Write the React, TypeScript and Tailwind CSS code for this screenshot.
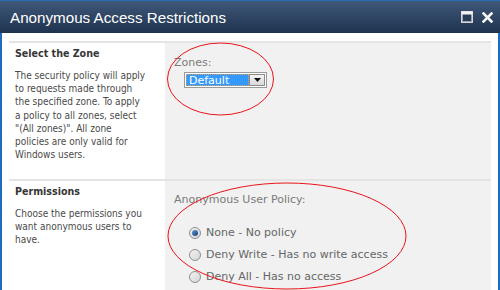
import React from "react";

const cond = { fontFamily: '"DejaVu Sans Condensed", "Liberation Sans", sans-serif', fontStretch: "condensed" as const };

function Radio({ checked }: { checked?: boolean }) {
  return (
    <div className="relative w-[12px] h-[12px] rounded-full border border-[#8e8f8f] bg-gradient-to-br from-[#f4f4f4] to-[#d4d4d4] flex items-center justify-center shrink-0">
      {checked && (
        <div className="w-[6px] h-[6px] rounded-full bg-gradient-to-br from-[#5b9bd5] to-[#1a3f77]" />
      )}
    </div>
  );
}

export default function App() {
  return (
    <div className="relative w-[500px] h-[290px] overflow-hidden bg-white flex flex-col">
      {/* Title bar */}
      <div className="h-[33px] shrink-0 border-t border-[#2a6db5] bg-gradient-to-b from-[#40587a] to-[#1e334e] flex items-center justify-between pl-[10px] pr-[7px]">
        <div
          className="text-white text-[15.2px] leading-none pt-[2px]"
          style={{ fontFamily: '"Liberation Sans", Arial, sans-serif' }}
        >
          Anonymous Access Restrictions
        </div>
        <div className="flex items-center gap-[9px]">
          <svg width="12" height="12" viewBox="0 0 12 12">
            <rect x="0.5" y="0.5" width="11" height="11" fill="#2a3d56" stroke="#d8d8d8" strokeWidth="1" />
            <rect x="1.5" y="1.5" width="9" height="9" fill="none" stroke="#9aa3ae" strokeWidth="1" />
            <rect x="0.5" y="0.5" width="11" height="3" fill="#f2f2f2" />
            <rect x="2.5" y="4.5" width="7" height="5" fill="#2a3d56" />
          </svg>
          <svg width="11" height="11" viewBox="0 0 11 11">
            <path d="M1.5 1.5 L9.5 9.5 M9.5 1.5 L1.5 9.5" stroke="#f5f5f5" strokeWidth="2.6" strokeLinecap="square" />
          </svg>
        </div>
      </div>

      {/* Body */}
      <div className="flex-1 border-l-2 border-r-2 border-[#1d6cc0] pt-[8px] pl-[7px] pr-[7px] flex flex-col">
        {/* Section 1 */}
        <div className="flex border-t-2 border-[#e4e4e4] h-[138px] shrink-0">
          <div className="w-[156px] pl-[6px] pt-[3px] text-[#4a4a4a]" style={cond}>
            <div className="font-bold text-[10.6px] leading-[14px] text-[#363636]">Select the Zone</div>
            <div className="mt-[9px] text-[10px] leading-[13.2px]">
              The security policy will apply
              <br />
              to requests made through
              <br />
              the specified zone. To apply
              <br />
              a policy to all zones, select
              <br />
              "(All zones)". All zone
              <br />
              policies are only valid for
              <br />
              Windows users.
            </div>
          </div>
          <div className="flex-1 bg-[#f1f1f1] pl-[9px] pt-[13px]" style={{ fontFamily: '"DejaVu Sans", Verdana, sans-serif' }}>
            <div className="text-[11px] leading-[14px] text-[#7a7a7a]">Zones:</div>
            <div className="mt-[2px] ml-[10px] w-[83px] h-[16px] border border-[#9a9a9a] bg-white flex p-[1px]">
              <div className="flex-1 bg-[#3399ff] border border-dotted border-[#e0a050] text-white text-[11px] leading-[11px] pl-[2px] flex items-center">
                Default
              </div>
              <div className="w-[16px] border border-[#8c8c8c] bg-gradient-to-b from-[#f5f5f5] to-[#d8d8d8] flex items-center justify-center">
                <svg width="7" height="4" viewBox="0 0 7 4">
                  <path d="M0 0 L7 0 L3.5 4 Z" fill="#111" />
                </svg>
              </div>
            </div>
          </div>
        </div>

        {/* Section 2 */}
        <div className="flex border-t-2 border-[#e4e4e4] flex-1">
          <div className="w-[156px] pl-[6px] pt-[3px] text-[#4a4a4a]" style={cond}>
            <div className="font-bold text-[10.6px] leading-[14px] text-[#363636]">Permissions</div>
            <div className="mt-[9px] text-[10px] leading-[13.2px]">
              Choose the permissions you
              <br />
              want anonymous users to
              <br />
              have.
            </div>
          </div>
          <div className="flex-1 bg-[#f1f1f1] pl-[9px] pt-[12px]" style={{ fontFamily: '"DejaVu Sans", Verdana, sans-serif' }}>
            <div className="text-[11px] leading-[14px] text-[#7a7a7a]">Anonymous User Policy:</div>
            <div className="mt-[15px] ml-[15px] flex flex-col text-[11px] text-[#666]">
              <div className="h-[22px] flex items-center gap-[5px]">
                <Radio checked />
                <span>None - No policy</span>
              </div>
              <div className="h-[22px] flex items-center gap-[5px]">
                <Radio />
                <span>Deny Write - Has no write access</span>
              </div>
              <div className="h-[22px] flex items-center gap-[5px]">
                <Radio />
                <span>Deny All - Has no access</span>
              </div>
            </div>
          </div>
        </div>
      </div>

      {/* Red annotation ellipses */}
      <svg className="absolute inset-0 pointer-events-none" width="500" height="290" viewBox="0 0 500 290">
        <ellipse cx="220.5" cy="79" rx="53" ry="36" fill="none" stroke="#e8141c" strokeWidth="1" />
        <ellipse cx="287" cy="236" rx="119" ry="53" fill="none" stroke="#e8141c" strokeWidth="1" />
      </svg>
    </div>
  );
}
